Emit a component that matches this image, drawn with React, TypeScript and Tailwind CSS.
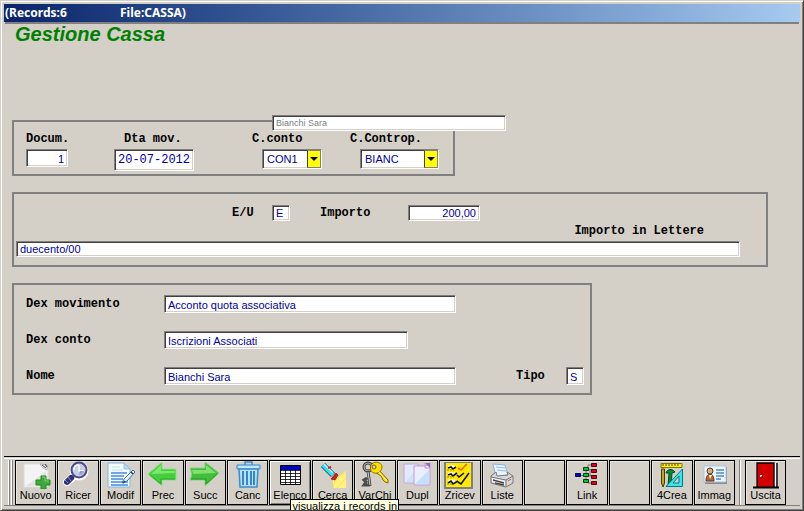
import type { ReactNode } from 'react';
import clsx from 'clsx';

const sunken =
  'border border-t-[#808080] border-l-[#808080] border-r-white border-b-white bg-white shadow-[inset_1px_1px_0_#404040,inset_-1px_-1px_0_#d4d0c8] outline-none';

type FieldProps = {
  id: string;
  value: string;
  className?: string;
};

function Field({ id, value, className }: FieldProps) {
  return (
    <input
      id={id}
      type="text"
      defaultValue={value}
      className={clsx(sunken, 'block min-w-0 px-[3px] pt-px text-[11px] text-[#0000a0]', className)}
    />
  );
}

function Label({ htmlFor, className, children }: { htmlFor: string; className?: string; children: ReactNode }) {
  return (
    <label
      htmlFor={htmlFor}
      className={clsx(
        "block shrink-0 whitespace-nowrap font-['Liberation_Mono','Courier_New',monospace] text-[12px] font-bold leading-4 text-black",
        className,
      )}
    >
      {children}
    </label>
  );
}

function Combo({ id, value, className }: FieldProps) {
  return (
    <div className={clsx('relative h-5', className)}>
      <select
        id={id}
        defaultValue={value}
        className={clsx(sunken, 'block h-5 w-full appearance-none pl-[4px] text-[11px] text-[#0000a0]')}
      >
        <option value={value}>{value}</option>
      </select>
      <span className="pointer-events-none absolute inset-y-px right-px flex w-[14px] items-center justify-center border border-t-[#808080] border-l-[#404040] border-r-[#808080] border-b-[#808080] bg-[#ffff00]">
        <svg width="8" height="4" viewBox="0 0 8 4">
          <path d="M0 0h8L4 4z" fill="#000" />
        </svg>
      </span>
    </div>
  );
}

function Icon({ children }: { children: ReactNode }) {
  return (
    <svg width="38" height="28" viewBox="0 0 38 28" fill="none" className="shrink-0">
      {children}
    </svg>
  );
}

const NewIcon = (
  <Icon>
    <path d="M7 3h18l6 5v18H7z" fill="#f4f4f4" stroke="#dcdcdc" />
    <path d="M9 25 29 10v15z" fill="#e2e2e2" />
    <path d="m23 3 7 1v5l-4-2z" fill="#fff" stroke="#999" strokeWidth=".7" />
    <path d="m25 4 4 3M28 3l2 3" stroke="#444" />
    <path d="M24 15h5v4h4v5h-4v4h-5v-4h-5v-5h5z" fill="#3cab3c" stroke="#238523" />
    <path d="M25 16h3v4h4" stroke="#82d66e" />
  </Icon>
);

const SearchIcon = (
  <Icon>
    <path d="m15 15-7 6" stroke="#fff" strokeWidth="8" strokeLinecap="round" />
    <circle cx="20" cy="10" r="9.500" fill="#fff" />
    <path d="m15 15-3 3" stroke="#7777ad" strokeWidth="3" />
    <path d="m12 17-4 4" stroke="#303078" strokeWidth="6" strokeLinecap="round" />
    <path d="m9 16 3 4M6 19l3 3" stroke="#8e8ed0" />
    <circle cx="20" cy="9" r="7.500" fill="#c8cce7" stroke="#4c4c86" strokeWidth="2" />
    <path d="M20 4v6h5M15 9c0-3 2-5 5-5" stroke="#f7f8ff" strokeWidth="1.5" />
    <path d="M21 10h4c-1 3-3 4-5 4z" fill="#989dcb" />
  </Icon>
);

const EditIcon = (
  <Icon>
    <path d="M6 2h16l6 6v18H6z" fill="#f2f9ff" stroke="#83b5e6" />
    <path d="M22 2v6h6z" fill="#b9dbf8" stroke="#83b5e6" strokeWidth=".7" />
    <path d="M10 6h8M10 9h11" stroke="#c3dcf3" />
    <path d="M9 12h16M9 15h13M9 18h12M9 21h17M9 24h17" stroke="#4a8bd8" strokeWidth="1.4" />
    <path d="m31 9 2 2-8 9-5 2 2-4z" fill="#e8f1fa" stroke="#3f71a9" />
    <path d="m29 11 2 2M21 22l2-2" stroke="#1c3f6c" strokeWidth="1.5" />
  </Icon>
);

const PrevIcon = (
  <Icon>
    <path d="M4 13 18 1v7h14v11H18v6z" fill="#45cf3c" stroke="#8ce083" strokeLinejoin="round" />
    <path d="M7 13 17 4v6h14v2z" fill="#7ce86c" />
    <path d="m6 14 11 9v-5h14" stroke="#29a529" />
  </Icon>
);

const NextIcon = (
  <Icon>
    <path d="M33 12 19 1v6H4c2 4 2 8 0 12h15v6z" fill="#43bd3b" stroke="#80d677" strokeLinejoin="round" />
    <path d="M30 12 20 4v5H6l1 4z" fill="#81df70" />
    <path d="M5 18h15v5l11-10" stroke="#239b25" />
  </Icon>
);

const TrashIcon = (
  <Icon>
    <path d="M16 4V1h7v3" stroke="#388ec9" strokeWidth="1.5" />
    <path d="M8 4h23v4H8z" fill="#a9d9f5" stroke="#388ec9" />
    <path d="M10 8h19l-1 18H11z" fill="#b7def4" stroke="#388ec9" strokeWidth="1.5" />
    <path d="M14 10v14M18 10v14M22 10v14M25 10v14" stroke="#2580bf" strokeWidth="1.8" />
    <path d="M10 6h19" stroke="#e6f6ff" />
  </Icon>
);

const ListIcon = (
  <Icon>
    <path d="M9.500 4.500h20v19h-20z" fill="#fff" stroke="#000" />
    <path d="M10 5h19v4H10z" fill="#0000c0" />
    <path d="M10 9.500h19M10 12.500h19M10 15.500h19M10 18.500h19M10 21.500h19M14.500 9v15M19.500 9v15M24.500 9v15" stroke="#000" strokeWidth=".8" />
  </Icon>
);

const TorchIcon = (
  <Icon>
    <path d="M19 15h6l7-5v17H19z" fill="#fff280" />
    <path d="M19 27c2-9 6-13 13-15M23 27l9-10" stroke="#ffd21f" strokeDasharray="1 1" />
    <path d="m9 4 10 10" stroke="#167" strokeWidth="6" />
    <path d="m9 4 10 10" stroke="#36dcee" strokeWidth="4" />
    <path d="m10 3 9 9" stroke="#b9fbff" strokeWidth="1.5" />
    <path d="m22 12-5 6 4 1 3-5z" fill="#d92020" stroke="#711" strokeWidth=".7" />
    <path d="m14 7 3-1" stroke="#e02020" strokeWidth="2" />
  </Icon>
);

const KeysIcon = (
  <Icon>
    <circle cx="12" cy="6" r="4" stroke="#444" strokeWidth="3" />
    <circle cx="12" cy="6" r="4" stroke="#aaa" />
    <path d="m12 10 2 15M11 17l-3 2 2 2-2 3h6" stroke="#4c4c4c" strokeWidth="3" />
    <path d="m12 11 2 13" stroke="#ccc" />
    <path d="m23 9 9 10v3l-3-1-2-2-2-4-6-4" fill="#f7d800" stroke="#846f00" />
    <path d="M17 2c4-2 9 0 9 4s-4 7-8 6-5-7-1-10Z" fill="#ffdf00" stroke="#8c7600" />
    <circle cx="18" cy="6" r="2" fill="#d4d0c8" stroke="#806b00" />
    <path d="m22 10 9 10" stroke="#fff59c" />
  </Icon>
);

const CopyIcon = (
  <Icon>
    <path d="M6 3h14v19H6z" fill="#e5e8fc" stroke="#c1a9dc" />
    <path d="M7 21 19 8v13z" fill="#cce3fa" />
    <path d="M16 5h12l4-3v22H16z" fill="#eceeff" stroke="#c09bdc" />
    <path d="M17 23 31 9v14z" fill="#c3e0fb" />
    <path d="M27 2h5v5z" fill="#9168c4" />
    <path d="M27 2v5h5" stroke="#c78ce1" />
  </Icon>
);

const ChecksIcon = (
  <Icon>
    <path d="M3 1h29v27H3z" fill="#808080" />
    <path d="M5 2h25v24H5z" fill="#ffe900" />
    <path d="M7 6h7M7 13h7M7 20h7" stroke="#fff" strokeWidth="3" />
    <path d="m7 7 3-1 2 2 3-2M7 14l3-1 2 2 4-3M7 22l3-2 2 3 5-3M16 14l2 2 5-4M17 21l3 2 8-11" stroke="#111" strokeWidth="1.6" />
    <path d="m17 7 3 2 6-6" stroke="#ef6b00" strokeWidth="1.6" />
    <path d="M6 9h7M6 16h7M6 23h6" stroke="#998c00" strokeDasharray="2 1" />
  </Icon>
);

const PrinterIcon = (
  <Icon>
    <path d="m10 3 12 1 3 10-12 2z" fill="#e7f4ff" stroke="#8bb2d9" />
    <path d="m13 6 9 1M14 9l9 1" stroke="#8dbde8" />
    <path d="m8 15 5-4 1 4 11-1-1-3 6 4v7l-7 4-15-4z" fill="#d8d8d8" stroke="#777" />
    <path d="m8 16 15 3 7-4M23 19v6" stroke="#777" />
    <path d="m9 17 13 3v4L9 21z" fill="#f5f5f5" />
    <path d="m10 19 11 3M12 22l9 2" stroke="#444" strokeWidth="1.4" />
    <path d="m25 20 3-2" stroke="#ba5a36" />
  </Icon>
);

const TreeIcon = (
  <Icon>
    <path d="M13 14.500h4M18 9v12M20 8.500V4h4M20 8.500h5M20 14.500h5M20 20.500V22h5M22 8v8" stroke="#777" />
    <path d="M7.500 12.500h5v3h-5z" fill="#0000d0" stroke="#000060" />
    <path d="M15.500 6.500h5v3h-5zM15.500 12.500h5v3h-5zM15.500 18.500h5v3h-5z" fill="#00c838" stroke="#003c10" />
    <path d="M23.500 2.500h5v3h-5zM23.500 8.500h5v3h-5zM23.500 14.500h5v3h-5zM23.500 20.500h5v3h-5z" fill="#e00020" stroke="#500008" />
  </Icon>
);

const DraftIcon = (
  <Icon>
    <path d="M8 2.500h21v4H8z" fill="#ffed23" stroke="#837300" />
    <path d="M10 3v2M13 3v2M16 3v2M19 3v2M22 3v2M25 3v2" stroke="#4e4600" />
    <path d="M8.500 8h3v14l-1.500 4-1.500-4z" fill="#c4a429" stroke="#493b00" />
    <path d="M13 12c1-4 6-5 9-1l-3 1-1 13h-3l1-13z" fill="#008d33" stroke="#00481b" />
    <path d="M29.500 8v17.500H13z" fill="#42e2e9" stroke="#007c89" />
    <path d="M26 15v7h-6z" fill="#d4d0c8" stroke="#007c89" />
  </Icon>
);

const CardIcon = (
  <Icon>
    <path d="M10 6h22v17H10z" fill="#8c8c8c" />
    <path d="M9 5h22v16H9z" fill="#eef6ff" stroke="#a6c5e8" />
    <path d="M11 20c0-5 2-7 4-7s4 2 4 7z" fill="#be632b" stroke="#5c3925" />
    <circle cx="15" cy="10" r="3" fill="#e6aa75" stroke="#4a382d" />
    <path d="m14 14 1 4 2-4" fill="#fff" />
    <path d="M21 9h8M21 12h8M21 15h8M21 18h5" stroke="#4d88c4" strokeWidth="1.3" />
  </Icon>
);

const ExitIcon = (
  <Icon>
    <path d="M9 2h20v25H9z" fill="#fff" />
    <path d="M10 2h17v24H10z" fill="#d40000" />
    <path d="M10 26V2h17v25M30 2v25" stroke="#000" strokeWidth="1.4" />
    <path d="M28 3h1v23h-1z" fill="#fff" />
    <path d="M6 26.500h26" stroke="#000" strokeWidth="2" />
    <path d="M13 15h2" stroke="#fff" strokeWidth="2" />
    <path d="M14 16h2" stroke="#300" />
  </Icon>
);

type Tool = {
  label: string;
  icon?: ReactNode;
  tip?: string;
};

const tools: Tool[] = [
  { label: 'Nuovo', icon: NewIcon },
  { label: 'Ricer', icon: SearchIcon },
  { label: 'Modif', icon: EditIcon },
  { label: 'Prec', icon: PrevIcon },
  { label: 'Succ', icon: NextIcon },
  { label: 'Canc', icon: TrashIcon },
  { label: 'Elenco', icon: ListIcon, tip: 'visualizza i records in' },
  { label: 'Cerca', icon: TorchIcon },
  { label: 'VarChi', icon: KeysIcon },
  { label: 'Dupl', icon: CopyIcon },
  { label: 'Zricev', icon: ChecksIcon },
  { label: 'Liste', icon: PrinterIcon },
  { label: '' },
  { label: 'Link', icon: TreeIcon },
  { label: '' },
  { label: '4Crea', icon: DraftIcon },
  { label: 'Immag', icon: CardIcon },
];

function ToolButton({ label, icon, tip }: Tool) {
  return (
    <div className="relative min-w-0">
      <button
        type="button"
        className={clsx(
          'flex h-[45px] w-full flex-col items-center overflow-hidden border border-black text-[11px] leading-3 text-black',
          tip ? 'shadow-[inset_1px_1px_0_#fff,inset_-1px_-1px_0_#808080]' : 'shadow-[inset_1px_1px_0_#e8e6e0]',
        )}
      >
        {icon}
        {label}
      </button>
      {tip && (
        <div
          role="tooltip"
          className="absolute top-[39px] left-[21px] z-10 whitespace-nowrap border border-black bg-[#ffffe1] px-px text-[11px] leading-[12px] text-black"
        >
          {tip}
        </div>
      )}
    </div>
  );
}

export default function App() {
  return (
    <div className="relative flex min-h-screen flex-col overflow-hidden border border-[#d4d0c8] border-r-[#404040] border-b-[#404040] bg-[#d4d0c8] font-['Liberation_Sans',Arial,sans-serif] shadow-[inset_1px_1px_0_#fff,inset_-1px_-1px_0_#808080]">
      <header className="mx-[3px] mt-[3px] flex h-[18px] items-center bg-linear-to-r from-[#0a246a] to-[#a6caf0] pl-px font-['Noto_Sans',Tahoma,sans-serif] text-[12px] font-bold text-white">
        <span className="w-[115px]">(Records:6</span>
        <span>File:CASSA)</span>
      </header>
      <div className="mx-1 h-[2px] bg-[#808080]" />

      <main className="flex flex-1 flex-col items-start gap-4 pl-[11px] pb-4">
        <h1 className="mb-[60px] h-5 pl-[3px] text-[20px] leading-5 font-bold text-[#008000] italic">Gestione Cassa</h1>

        <section className="relative flex w-[443px] border-2 border-[#808080] pt-[9px] pb-[3px] pl-3">
          <div className="flex w-[88px] flex-col gap-[2px]">
            <Label htmlFor="docum">Docum.</Label>
            <Field id="docum" value="1" className="h-[18px] w-[42px] text-right" />
          </div>
          <div className="flex w-[138px] flex-col gap-[2px]">
            <Label htmlFor="data" className="pl-[10px]">Dta mov.</Label>
            <input
              id="data"
              type="text"
              defaultValue="20-07-2012"
              className={clsx(sunken, "h-[22px] w-20 px-[3px] font-['Liberation_Mono','Courier_New',monospace] text-[12px] text-[#0000a0]")}
            />
          </div>
          <div className="flex w-[98px] flex-col gap-[2px]">
            <Label htmlFor="conto">C.conto</Label>
            <Combo id="conto" value="CON1" className="ml-[10px] w-[60px]" />
          </div>
          <div className="flex flex-col gap-[2px]">
            <Label htmlFor="controp">C.Controp.</Label>
            <Combo id="controp" value="BIANC" className="ml-[10px] w-[79px]" />
          </div>
          <input
            type="text"
            aria-label="Nominativo contropartita"
            readOnly
            value="Bianchi Sara"
            className={clsx(sunken, 'absolute -top-[7px] left-[258px] h-4 w-[234px] px-[3px] text-[9px] text-[#808080]')}
          />
        </section>

        <section className="w-full max-w-[756px] border-2 border-[#808080] pt-[11px] pr-[26px] pb-2 pl-[2px]">
          <div className="flex items-center pl-[216px]">
            <Label htmlFor="eu" className="w-10">E/U</Label>
            <Field id="eu" value="E" className="h-4 w-[18px]" />
            <Label htmlFor="importo" className="ml-[30px] w-[88px]">Importo</Label>
            <Field id="importo" value="200,00" className="h-4 w-[72px] text-right" />
          </div>
          <div className="flex flex-col gap-[2px] pt-[2px]">
            <Label htmlFor="lettere" className="self-end pr-[36px]">Importo in Lettere</Label>
            <Field id="lettere" value="duecento/00" className="h-4 w-full" />
          </div>
        </section>

        <section className="flex w-full max-w-[580px] flex-col gap-[18px] border-2 border-[#808080] pt-[10px] pb-2 pl-3">
          <div className="flex items-center">
            <Label htmlFor="dexmov" className="w-[138px]">Dex movimento</Label>
            <Field id="dexmov" value="Acconto quota associativa" className="h-[18px] w-[292px]" />
          </div>
          <div className="flex items-center">
            <Label htmlFor="dexconto" className="w-[138px]">Dex conto</Label>
            <Field id="dexconto" value="Iscrizioni Associati" className="h-[18px] w-[244px]" />
          </div>
          <div className="flex items-center">
            <Label htmlFor="nome" className="w-[138px]">Nome</Label>
            <Field id="nome" value="Bianchi Sara" className="h-[18px] w-[292px]" />
            <Label htmlFor="tipo" className="ml-[60px] w-[50px]">Tipo</Label>
            <Field id="tipo" value="S" className="h-[18px] w-[18px]" />
          </div>
        </section>
      </main>

      <footer className="mx-[3px] mb-1 border-t border-black pt-px">
        <div className="flex border-t border-b border-t-white border-b-[#808080] pt-px">
          <div className="mr-[2px] ml-1 flex gap-px">
            <div className="w-[2px] border-r border-l border-r-[#808080] border-l-white" />
            <div className="w-[2px] border-r border-l border-r-[#808080] border-l-white" />
          </div>
          <div className="grid w-full max-w-[720px] grid-cols-[repeat(17,minmax(0,1fr))] gap-px">
            {tools.map((tool, i) => (
              <ToolButton key={i} {...tool} />
            ))}
          </div>
          <div className="mx-1 w-[2px] shrink-0 border-r border-l border-r-white border-l-[#808080]" />
          <div className="w-[41px] shrink-0">
            <ToolButton label="Uscita" icon={ExitIcon} />
          </div>
        </div>
      </footer>
    </div>
  );
}
